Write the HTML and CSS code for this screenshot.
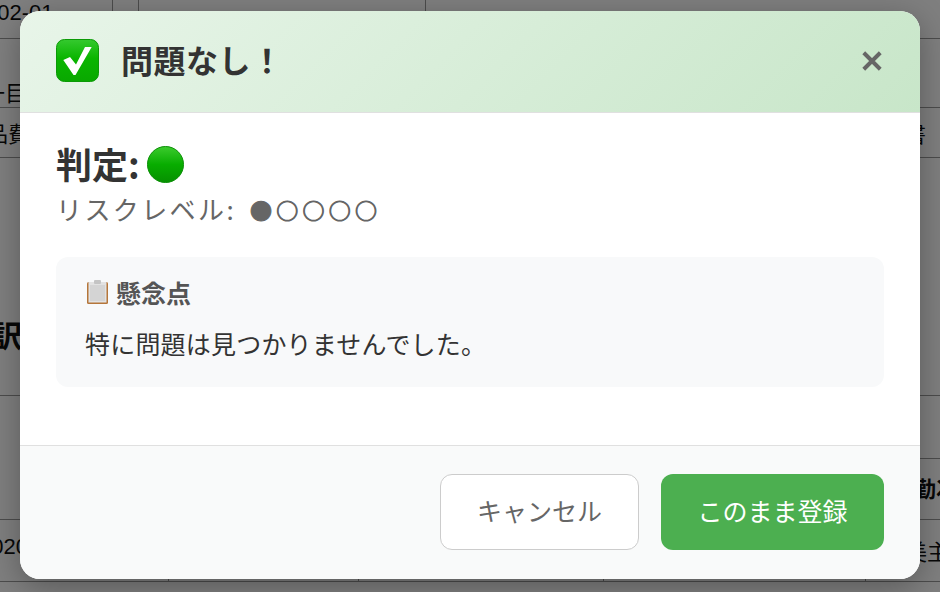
FILE: index.html
```html
<!DOCTYPE html>
<html lang="ja">
<head>
    <meta charset="UTF-8">
    <meta name="viewport" content="width=device-width, initial-scale=1.0">
    <title>問題なし</title>
    <link rel="stylesheet" href="styles.css">
</head>
<body>
    <div class="sheet">
        <div class="sheetRow rowDate">
            <div class="cell cellDate">2025-02-01</div>
            <div class="cell cellNarrow"></div>
            <div class="cell cellWide"></div>
        </div>
        <div class="sheetRow rowItem"><div class="cell cellItem">一目</div></div>
        <div class="sheetRow rowCost">
            <div class="cell cellCost">備品費</div>
            <div class="cell cellBook">書</div>
        </div>
        <div class="sheetRow rowHead"><div class="cell cellHead">内訳</div></div>
        <div class="sheetRow rowSub">
            <div class="cell cellSub">勤次</div>
        </div>
        <div class="sheetRow rowLast">
            <div class="cell cellYear">2020</div>
            <div class="cell cellMid"></div>
            <div class="cell cellMidWide"></div>
            <div class="cell cellMidLong"></div>
            <div class="cell cellOwner">美主</div>
        </div>
    </div>

    <div class="backdrop"></div>

    <div class="modal">
        <div class="modalHeader">
            <div class="modalTitle">
                <svg class="checkIcon" viewBox="0 0 43 43">
                    <defs>
                        <linearGradient id="checkBg" x1="0" y1="0" x2="0" y2="1">
                            <stop offset="0" stop-color="#35c92f"/>
                            <stop offset="0.45" stop-color="#0ab500"/>
                            <stop offset="1" stop-color="#09a800"/>
                        </linearGradient>
                    </defs>
                    <rect x="0.5" y="0.5" width="42" height="42" rx="8" fill="url(#checkBg)" stroke="#0b9a06"/>
                    <path d="M7.3 21L14 18l6 7.5L29 8h6.7L19.5 36h-2z" fill="#fff"/>
                </svg>
                <h2>問題なし！</h2>
            </div>
            <button class="closeButton">
                <svg viewBox="0 0 20 20"><path d="M2.5 2.5l15 15M17.5 2.5l-15 15"/></svg>
            </button>
        </div>

        <div class="modalBody">
            <div class="verdict">
                <span>判定:</span>
                <svg class="verdictDot" viewBox="0 0 37 37">
                    <defs>
                        <linearGradient id="dotBg" x1="0" y1="0" x2="0" y2="1">
                            <stop offset="0" stop-color="#3ccb2e"/>
                            <stop offset="0.5" stop-color="#08ad00"/>
                            <stop offset="1" stop-color="#069000"/>
                        </linearGradient>
                    </defs>
                    <circle cx="18.5" cy="18.5" r="18" fill="url(#dotBg)" stroke="#0c8f08"/>
                </svg>
            </div>
            <div class="riskLevel">
                <span class="riskLabel">リスクレベル:</span>
                <span class="riskDots">●○○○○</span>
            </div>

            <div class="concernBox">
                <div class="concernTitle">
                    <svg class="clipIcon" viewBox="0 0 21 24">
                        <rect x="0" y="2" width="21" height="22" rx="1.5" fill="#b5763a"/>
                        <rect x="1.5" y="2" width="18" height="20.5" fill="#e2e2e2"/>
                        <rect x="3" y="5" width="15" height="16" fill="#d4d4d4"/>
                        <rect x="7" y="0" width="7" height="4" rx="1" fill="#c4c4c4"/>
                    </svg>
                    <span>懸念点</span>
                </div>
                <p class="concernText">特に問題は見つかりませんでした。</p>
            </div>
        </div>

        <div class="modalFooter">
            <button class="btn btnCancel">キャンセル</button>
            <button class="btn btnOk">このまま登録</button>
        </div>
    </div>
</body>
</html>
```

FILE: styles.css
```css
body {
    font-family: "Liberation Sans", "Noto Sans CJK JP", sans-serif;
    margin: 0;
    padding: 0;
    width: 940px;
    height: 592px;
    overflow: hidden;
    position: relative;
    background-color: #fff;
    color: #333;
}

/* 背景の表 */
.sheet {
    display: flex;
    flex-direction: column;
    font-size: 22px;
    color: #111;
}

.sheetRow {
    display: flex;
    box-sizing: border-box;
    border-bottom: 1px solid #999;
    justify-content: space-between;
}

.rowDate { height: 39px; justify-content: flex-start; }
.rowItem { height: 69px; align-items: flex-end; }
.rowCost { height: 50px; padding-top: 8px; }
.rowHead { height: 238px; padding-top: 114px; align-items: center; }
.rowSub { height: 124px; justify-content: flex-end; }
.rowLast { height: 62px; justify-content: flex-start; }

.cell {
    flex: none;
    white-space: nowrap;
    box-sizing: border-box;
}

.cellDate {
    width: 172px;
    margin-left: -59px;
    border-right: 1px solid #999;
}

.cellNarrow {
    width: 26px;
    border-right: 1px solid #999;
}

.cellWide {
    width: 287px;
    border-right: 1px solid #999;
}

.cellItem { margin-left: -17px; }
.cellCost { margin-left: -36px; }
.cellBook { margin-right: 14px; }

.cellHead {
    margin-left: -38px;
    font-size: 30px;
    font-weight: bold;
}

.cellSub {
    width: 26px;
    margin-top: 62px;
    padding-top: 12px;
    overflow: hidden;
    border-top: 1px solid #999;
    font-weight: bold;
}

.cellYear {
    width: 190px;
    margin-left: -21px;
    padding-top: 14px;
    border-right: 1px solid #999;
}

.cellMid {
    width: 190px;
    border-right: 1px solid #999;
}

.cellMidWide {
    width: 245px;
    border-right: 1px solid #999;
}

.cellMidLong {
    width: 262px;
    border-right: 1px solid #999;
}

.cellOwner {
    padding-left: 39px;
    padding-top: 14px;
}

.backdrop {
    position: absolute;
    inset: 0;
    background-color: rgba(0, 0, 0, 0.5);
}

/* モーダル */
.modal {
    position: absolute;
    top: 11px;
    left: 20px;
    width: 900px;
    height: 568px;
    display: flex;
    flex-direction: column;
    background-color: #fff;
    border-radius: 20px;
    overflow: hidden;
    box-shadow: 0 8px 32px rgba(0, 0, 0, 0.3);
    font-family: "Noto Sans CJK JP", sans-serif;
}

.modalHeader {
    height: 102px;
    box-sizing: border-box;
    display: flex;
    justify-content: space-between;
    align-items: center;
    padding: 0 36px 2px;
    background: linear-gradient(135deg, #e8f5e9, #c8e6c9);
    border-bottom: 1px solid #e0e0e0;
}

.modalTitle {
    display: flex;
    align-items: center;
    gap: 22px;
}

.modalTitle h2 {
    margin: 0 0 3px;
    font-size: 32px;
    font-weight: 700;
    line-height: 1;
    letter-spacing: 0.5px;
    color: #333;
}

.checkIcon {
    width: 43px;
    height: 43px;
}

.closeButton {
    width: 22px;
    height: 22px;
    padding: 0;
    margin-right: 1px;
    border: none;
    background: none;
    cursor: pointer;
}

.closeButton svg {
    display: block;
    width: 22px;
    height: 22px;
    fill: none;
    stroke: #666;
    stroke-width: 3.6;
}

.modalBody {
    flex: 1;
    padding: 32px 36px 0;
}

.verdict {
    display: flex;
    align-items: center;
    gap: 7px;
    font-size: 36px;
    font-weight: 700;
    line-height: 40px;
    color: #333;
}

.verdict span {
    margin-top: -2px;
}

.verdictDot {
    width: 37px;
    height: 37px;
}

.riskLevel {
    display: flex;
    align-items: center;
    gap: 14px;
    margin-top: 7px;
    font-size: 26px;
    line-height: 38px;
    color: #666;
}

.riskLabel {
    letter-spacing: 2.4px;
}

.riskDots {
    font-size: 22px;
    letter-spacing: 4.25px;
    -webkit-text-stroke: 1px #666;
}

.concernBox {
    margin-top: 29px;
    height: 130px;
    box-sizing: border-box;
    padding: 19px 30px;
    background-color: #f8f9fa;
    border-radius: 12px;
}

.concernTitle {
    display: flex;
    align-items: center;
    gap: 8px;
    padding-left: 1px;
    font-size: 25px;
    font-weight: 700;
    line-height: 32px;
    color: #555;
}

.clipIcon {
    width: 21px;
    height: 24px;
}

.concernText {
    margin: 18px 0 0 -1px;
    font-size: 25px;
    line-height: 34px;
    color: #333;
    letter-spacing: 0.2px;
}

.modalFooter {
    height: 134px;
    box-sizing: border-box;
    display: flex;
    justify-content: flex-end;
    gap: 22px;
    padding: 28px 36px;
    background-color: #f9fafa;
    border-top: 1px solid #e0e0e0;
}

.btn {
    height: 76px;
    box-sizing: border-box;
    padding-bottom: 6px;
    border-radius: 12px;
    font-family: "Noto Sans CJK JP", sans-serif;
    font-size: 25px;
    font-weight: 400;
    cursor: pointer;
}

.btnCancel {
    width: 199px;
    border: 1px solid #ccc;
    background-color: #fff;
    color: #666;
}

.btnOk {
    width: 223px;
    border: none;
    background-color: #4caf50;
    color: #fff;
}
```
